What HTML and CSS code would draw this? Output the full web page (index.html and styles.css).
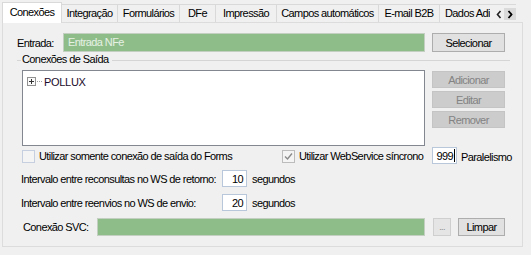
FILE: index.html
```html
<!DOCTYPE html>
<html lang="pt">
<head>
<meta charset="utf-8">
<link rel="stylesheet" href="styles.css">
</head>
<body>
<div class="window">
  <div class="tabs">
    <div class="tab active">Conexões</div>
    <div class="tab tab-integracao">Integração</div>
    <div class="tab tab-formularios">Formulários</div>
    <div class="tab tab-dfe">DFe</div>
    <div class="tab tab-impressao">Impressão</div>
    <div class="tab tab-campos">Campos automáticos</div>
    <div class="tab tab-email">E-mail B2B</div>
    <div class="tab tab-dados">Dados Adicionais</div>
    <div class="scroller">
      <span class="arrow"><svg width="6" height="9" viewBox="0 0 6 9"><path d="M4.5 1 L1.5 4.5 L4.5 8" fill="none" stroke="#222" stroke-width="1.6"/></svg></span>
      <span class="arrow on"><svg width="6" height="9" viewBox="0 0 6 9"><path d="M1.5 1 L4.5 4.5 L1.5 8" fill="none" stroke="#000" stroke-width="1.8"/></svg></span>
    </div>
  </div>
  <div class="page">
    <div class="row entrada">
      <span class="lbl entrada-lbl">Entrada:</span>
      <div class="field green entrada-field">Entrada NFe</div>
      <button class="btn wide">Selecionar</button>
    </div>
    <div class="group">
      <div class="legend"><span>Conexões de Saída</span></div>
      <div class="group-body">
        <div class="tree">
          <div class="node">
            <span class="plus"></span><span class="dots"></span><span class="node-text">POLLUX</span>
          </div>
        </div>
        <div class="btn-col">
          <button class="btn wide dis">Adicionar</button>
          <button class="btn wide dis">Editar</button>
          <button class="btn wide dis">Remover</button>
        </div>
      </div>
    </div>
    <div class="row checks">
      <label class="check c1"><span class="box"></span>Utilizar somente conexão de saída do Forms</label>
      <label class="check c2"><span class="box checked"><svg width="9" height="9" viewBox="0 0 9 9"><path d="M1 4.5 L3.5 7 L8 1.5" fill="none" stroke="#8a8a8a" stroke-width="1.4"/></svg></span>Utilizar WebService síncrono</label>
      <div class="num n3">999<span class="caret"></span></div>
      <span class="lbl par">Paralelismo</span>
    </div>
    <div class="row interval">
      <span class="lbl long">Intervalo entre reconsultas no WS de retorno:</span>
      <div class="num">10</div>
      <span class="lbl">segundos</span>
    </div>
    <div class="row interval i2">
      <span class="lbl long">Intervalo entre reenvios no WS de envio:</span>
      <div class="num">20</div>
      <span class="lbl">segundos</span>
    </div>
    <div class="row svc">
      <span class="lbl svc-lbl">Conexão SVC:</span>
      <div class="field green svc-field"></div>
      <button class="btn dots-btn">...</button>
      <button class="btn limpar">Limpar</button>
    </div>
  </div>
</div>
</body>
</html>
```
FILE: styles.css
```css
* { box-sizing: border-box; }
html, body { margin: 0; padding: 0; }
body {
  background: #f0f0f0;
  font-family: "Liberation Sans", Arial, sans-serif;
  font-size: 11px;
  letter-spacing: -0.6px;
  color: #000;
  width: 531px;
  height: 255px;
  overflow: hidden;
}
.window {
  padding: 2px 0 0 2px;
  width: 523px;
}
.tabs {
  display: flex;
  align-items: flex-end;
  height: 20px;
  position: relative;
  z-index: 1;
}
.tab {
  height: 18px;
  line-height: 17px;
  border: 1px solid #d9d9d9;
  border-left: none;
  border-bottom: none;
  background: #f0f0f0;
  white-space: nowrap;
  text-align: center;
  overflow: hidden;
}
.tab.active {
  width: 60px;
  height: 21px;
  line-height: 19px;
  background: #fff;
  border-left: 1px solid #d9d9d9;
  margin-bottom: -1px;
}
.tab-integracao { width: 56px; }
.tab-formularios { width: 62px; }
.tab-dfe { width: 36px; }
.tab-impressao { width: 61px; }
.tab-campos { width: 102px; }
.tab-email { width: 61px; }
.tab-dados {
  width: 57px;
  border-right: none;
  text-align: left;
  padding-left: 5px;
}
.scroller {
  display: flex;
  align-items: center;
  height: 18px;
  padding-top: 2px;
  margin-left: -7px;
  background: linear-gradient(#d9d9d9, #d9d9d9) top/100% 1px no-repeat, #f0f0f0;
  padding-left: 3px;
}
.arrow {
  width: 11px;
  height: 12px;
  display: flex;
  align-items: center;
  justify-content: center;
}
.arrow.on { background: #dadada; width: 12px; height: 12px; }
.page {
  border: 1px solid #dcdcdc;
  height: 225px;
  width: 521px;
  padding: 10px 0 0 14px;
  background: #f0f0f0;
}
.row { display: flex; align-items: center; }
.lbl { white-space: nowrap; }
.entrada { height: 19px; }
.entrada-lbl { width: 46px; }
.field {
  height: 19px;
  border: 1px solid #c2cfc1;
}
.green {
  background: #8fbd8a;
  color: #e6f1e4;
  padding: 2px 0 0 4px;
}
.entrada-field { width: 362px; }
.btn {
  font-family: inherit;
  font-size: 11px;
  letter-spacing: -0.6px;
  color: #000;
  background: #e1e1e1;
  border: 1px solid #adadad;
  height: 19px;
  padding: 0;
  margin: 0;
}
.btn.wide { width: 73px; margin-left: 7px; }
.btn.dis { color: #838383; background: #cccccc; border-color: #c4c4c4; height: 17px; margin-left: 0; }
.group { width: 493px; }
.legend {
  height: 1px;
  background: #d5d5d5;
  position: relative;
  margin-top: 8px;
}
.legend span {
  position: absolute;
  left: 4px;
  top: -7px;
  line-height: 13px;
  padding: 0 4px 0 1px;
  background: #f0f0f0;
}
.group-body { display: flex; padding-left: 5px; margin-top: 9px; }
.tree {
  width: 403px;
  height: 76px;
  background: #fff;
  border: 1px solid #828790;
  padding: 5px 0 0 4px;
}
.node { display: flex; align-items: center; height: 11px; }
.plus {
  width: 9px; height: 9px;
  border: 1px solid #919191;
  position: relative;
  background: #fafafa;
}
.plus::before, .plus::after {
  content: ""; position: absolute; background: #333;
}
.plus::before { left: 1px; top: 3px; width: 5px; height: 1px; }
.plus::after { left: 3px; top: 1px; width: 1px; height: 5px; }
.dots { width: 5px; border-top: 1px dotted #a0a0a0; margin-left: 1px; }
.node-text { margin-left: 2px; color: #1a0b2a; letter-spacing: -0.3px; }
.btn-col { display: flex; flex-direction: column; gap: 3px; margin-left: 7px; margin-top: 1px; }
.checks { margin-top: 1px; height: 17px; padding-left: 5px; }
.check { display: flex; align-items: center; white-space: nowrap; }
.c1 { width: 260px; }
.c2 { width: 150px; }
.box {
  width: 13px; height: 13px;
  border: 1px solid #c5cfdf;
  background: #f4f4f4;
  margin-right: 4px;
  margin-top: 2px;
  display: flex; align-items: center; justify-content: center;
}
.box.checked { border-color: #bcbcbc; }
.num {
  width: 25px; height: 17px;
  background: #fff;
  border: 1px solid #b9c7da;
  text-align: right;
  padding: 1px 3px 0 0;
  line-height: 14px;
}
.num.n3 { padding-right: 1px; }
.caret { display: inline-block; width: 1px; height: 13px; background: #000; vertical-align: -2px; margin-left: 1px; }
.par { margin-left: 4px; margin-top: 2px; }
.interval { margin-top: 6px; height: 17px; padding-left: 4px; }
.interval.i2 { margin-top: 7px; }
.interval .long { width: 201px; }
.interval .num { margin-right: 5px; }
.svc { margin-top: 7px; height: 18px; padding-left: 6px; }
.svc-lbl { width: 74px; }
.svc-field { width: 328px; height: 18px; }
.dots-btn { width: 18px; height: 18px; margin-left: 8px; color: #8a8a8a; background: #e5e5e5; border-color: #cfcfcf; font-size: 9px; }
.limpar { width: 47px; height: 18px; margin-left: 7px; }
```
